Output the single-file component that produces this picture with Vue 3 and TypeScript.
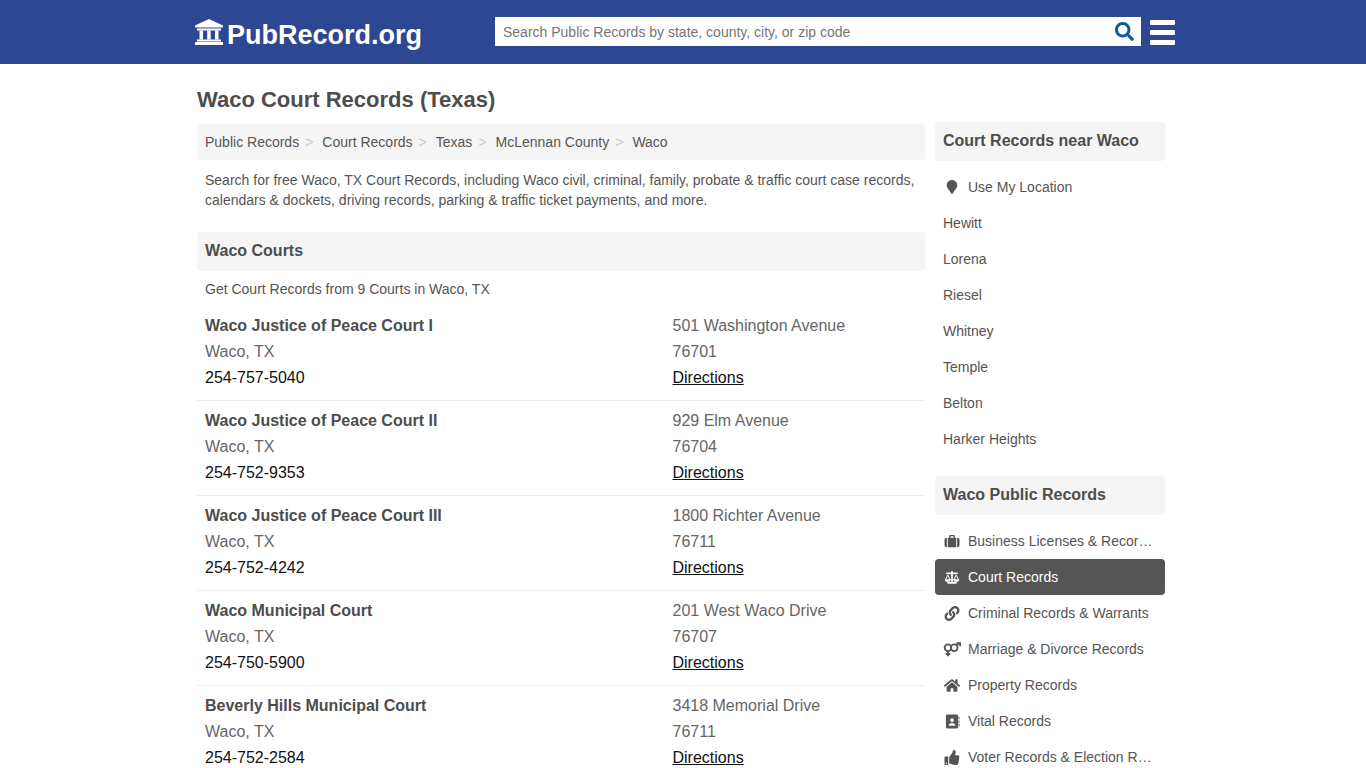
<script setup lang="ts">
const crumbs = ['Public Records', 'Court Records', 'Texas', 'McLennan County', 'Waco']

const courts = [
  { name: 'Waco Justice of Peace Court I', phone: '254-757-5040', street: '501 Washington Avenue', zip: '76701' },
  { name: 'Waco Justice of Peace Court II', phone: '254-752-9353', street: '929 Elm Avenue', zip: '76704' },
  { name: 'Waco Justice of Peace Court III', phone: '254-752-4242', street: '1800 Richter Avenue', zip: '76711' },
  { name: 'Waco Municipal Court', phone: '254-750-5900', street: '201 West Waco Drive', zip: '76707' },
  { name: 'Beverly Hills Municipal Court', phone: '254-752-2584', street: '3418 Memorial Drive', zip: '76711' },
]

const nearby = ['Hewitt', 'Lorena', 'Riesel', 'Whitney', 'Temple', 'Belton', 'Harker Heights']

const categories = [
  { label: 'Business Licenses & Records', icon: 'suitcase' },
  { label: 'Court Records', icon: 'scale', active: true },
  { label: 'Criminal Records & Warrants', icon: 'link' },
  { label: 'Marriage & Divorce Records', icon: 'venus' },
  { label: 'Property Records', icon: 'home' },
  { label: 'Vital Records', icon: 'book' },
  { label: 'Voter Records & Election Records', icon: 'thumb' },
]
</script>

<template>
  <header class="topbar">
    <div class="topbar-inner">
      <a class="logo">
        <svg class="logo-icon" viewBox="0 0 28 28" fill="#fff">
          <path d="M14 1 L28 7.5 V9.5 H0 V7.5 Z" />
          <rect x="2" y="10.5" width="24" height="2" />
          <rect x="4.5" y="12.5" width="3.5" height="9" />
          <rect x="12.2" y="12.5" width="3.5" height="9" />
          <rect x="20" y="12.5" width="3.5" height="9" />
          <rect x="2" y="21.5" width="24" height="2" />
          <rect x="0" y="24" width="28" height="3" />
        </svg>
        <span>PubRecord.org</span>
      </a>
      <div class="search">
        <span class="search-text">Search Public Records by state, county, city, or zip code</span>
        <svg class="search-icon" viewBox="0 0 512 512" fill="#0b5a9e">
          <path d="M505 442.7L405.3 343c-4.5-4.5-10.6-7-17-7H372c27.6-35.3 44-79.7 44-128C416 93.1 322.9 0 208 0S0 93.1 0 208s93.1 208 208 208c48.3 0 92.7-16.4 128-44v16.3c0 6.4 2.5 12.5 7 17l99.7 99.7c9.4 9.4 24.6 9.4 33.9 0l28.3-28.3c9.4-9.4 9.4-24.6.1-34zM208 336c-70.7 0-128-57.2-128-128 0-70.7 57.2-128 128-128 70.7 0 128 57.2 128 128 0 70.7-57.2 128-128 128z" />
        </svg>
      </div>
      <div class="burger"><i></i><i></i><i></i></div>
    </div>
  </header>

  <div class="page">
    <main class="main">
      <h1>Waco Court Records (Texas)</h1>
      <nav class="crumbs">
        <span v-for="(c, i) in crumbs" :key="c" class="crumb">
          {{ c }}<em v-if="i < crumbs.length - 1">&gt;</em>
        </span>
      </nav>
      <p class="intro">
        Search for free Waco, TX Court Records, including Waco civil, criminal, family, probate &amp; traffic court case records, calendars &amp; dockets, driving records, parking &amp; traffic ticket payments, and more.
      </p>
      <h2 class="bar">Waco Courts</h2>
      <p class="count">Get Court Records from 9 Courts in Waco, TX</p>
      <div v-for="court in courts" :key="court.name" class="court">
        <div class="court-col">
          <strong>{{ court.name }}</strong>
          <span>Waco, TX</span>
          <span class="dark">{{ court.phone }}</span>
        </div>
        <div class="court-col">
          <span>{{ court.street }}</span>
          <span>{{ court.zip }}</span>
          <a class="dark directions">Directions</a>
        </div>
      </div>
    </main>

    <aside class="side">
      <h2 class="bar">Court Records near Waco</h2>
      <ul class="links first">
        <li>
          <svg class="ic pin" viewBox="0 0 384 512" fill="#555">
            <path d="M172.268 501.67C26.97 291.031 0 269.413 0 192 0 85.961 85.961 0 192 0s192 85.961 192 192c0 77.413-26.97 99.031-172.268 309.67-9.535 13.774-29.93 13.773-39.464 0z" />
          </svg>
          <span class="label">Use My Location</span>
        </li>
        <li v-for="city in nearby" :key="city"><span class="label">{{ city }}</span></li>
      </ul>

      <h2 class="bar">Waco Public Records</h2>
      <ul class="links">
        <li v-for="cat in categories" :key="cat.label" :class="{ active: cat.active }">
          <svg v-if="cat.icon === 'suitcase'" class="ic" viewBox="0 0 16 16" fill="currentColor">
            <path d="M0 6a2 2 0 0 1 2-2h.5v10H2a2 2 0 0 1-2-2zM3.5 4H5V2.5A1.5 1.5 0 0 1 6.5 1h3A1.5 1.5 0 0 1 11 2.500V4h1.500v10h-9zM6.300 4h3.400V2.300H6.300zM13.500 4H14a2 2 0 0 1 2 2v6a2 2 0 0 1-2 2h-.5z" />
          </svg>
          <svg v-else-if="cat.icon === 'scale'" class="ic wide" viewBox="0 0 20 16" fill="currentColor">
            <path d="M9 1h2v1.500h5.500v1.300l-2 .3 3.500 6.400c0 1.600-1.600 2.500-3.300 2.500s-3.200-.9-3.200-2.500l3-6.200L11 4v9h4v2H5v-2h4V4l-3.500.3 3 6.200c0 1.600-1.500 2.500-3.200 2.500S2 12.100 2 10.500l3.500-6.400-2-.3V2.500H9zM5.300 6.300 3.600 10h3.400zM14.700 6.300 13 10h3.400z" />
          </svg>
          <svg v-else-if="cat.icon === 'link'" class="ic" viewBox="0 0 512 512" fill="currentColor">
            <path d="M326.612 185.391c59.747 59.809 58.927 155.698.36 214.59-.11.12-.24.25-.36.37l-67.2 67.2c-59.27 59.27-155.699 59.262-214.96 0-59.27-59.26-59.27-155.7 0-214.96l37.106-37.106c9.84-9.84 26.786-3.3 27.294 10.606.648 17.722 3.826 35.527 9.69 52.721 1.986 5.822.567 12.262-3.783 16.612l-13.087 13.087c-28.026 28.026-28.905 73.66-1.155 101.96 28.024 28.579 74.086 28.749 102.325.51l67.2-67.19c28.191-28.191 28.073-73.757 0-101.83-3.701-3.694-7.429-6.564-10.341-8.569a16.037 16.037 0 0 1-6.947-12.606c-.396-10.567 3.348-21.456 11.698-29.806l21.054-21.055c5.521-5.521 14.182-6.199 20.584-1.731a152.482 152.482 0 0 1 20.522 17.197zM467.547 44.449c-59.261-59.262-155.69-59.27-214.96 0l-67.2 67.2c-.12.12-.25.25-.36.37-58.566 58.892-59.387 154.781.36 214.59a152.454 152.454 0 0 0 20.521 17.196c6.402 4.468 15.064 3.789 20.584-1.731l21.054-21.055c8.35-8.35 12.094-19.239 11.698-29.806a16.037 16.037 0 0 0-6.947-12.606c-2.912-2.005-6.64-4.875-10.341-8.569-28.073-28.073-28.191-73.639 0-101.83l67.2-67.19c28.239-28.239 74.3-28.069 102.325.51 27.75 28.3 26.872 73.934-1.155 101.96l-13.087 13.087c-4.35 4.35-5.769 10.79-3.783 16.612 5.864 17.194 9.042 34.999 9.69 52.721.509 13.906 17.454 20.446 27.294 10.606l37.106-37.106c59.271-59.259 59.271-155.699.001-214.959z" />
          </svg>
          <svg v-else-if="cat.icon === 'venus'" class="ic wide" viewBox="0 0 20 16" fill="none" stroke="currentColor" stroke-width="2">
            <circle cx="5.500" cy="6" r="3.700" />
            <path d="M5.500 9.700V15.500M3 13h5" />
            <circle cx="12.500" cy="6" r="3.700" />
            <path d="M15 3.300 18.200.8M14.800.9h4.200v3.600" />
          </svg>
          <svg v-else-if="cat.icon === 'home'" class="ic" viewBox="0 0 576 512" fill="currentColor">
            <path d="M280.37 148.26L96 300.11V464a16 16 0 0 0 16 16l112.06-.29a16 16 0 0 0 15.92-16V368a16 16 0 0 1 16-16h64a16 16 0 0 1 16 16v95.64a16 16 0 0 0 16 16.05L464 480a16 16 0 0 0 16-16V300L295.67 148.26a12.19 12.19 0 0 0-15.3 0zM571.6 251.47L488 182.56V44.05a12 12 0 0 0-12-12h-56a12 12 0 0 0-12 12v72.61L318.47 43a48 48 0 0 0-61 0L4.34 251.47a12 12 0 0 0-1.6 16.9l25.5 31A12 12 0 0 0 45.15 301l235.22-193.74a12.19 12.19 0 0 1 15.3 0L530.9 301a12 12 0 0 0 16.9-1.6l25.5-31a12 12 0 0 0-1.7-16.93z" />
          </svg>
          <svg v-else-if="cat.icon === 'book'" class="ic" viewBox="0 0 16 16" fill="currentColor">
            <path d="M3 .5h10A1.500 1.500 0 0 1 14.500 2v12a1.500 1.500 0 0 1-1.500 1.500H3A1.500 1.500 0 0 1 1.500 14V2A1.500 1.500 0 0 1 3 .5zM8 4.500a2 2 0 1 0 0 4 2 2 0 0 0 0-4zM4.500 12.500h7c0-2-1.500-3-3.500-3s-3.500 1-3.500 3z" fill-rule="evenodd" />
            <path d="M15 3h1v2.500h-1zM15 6.800h1v2.500h-1zM15 10.500h1V13h-1z" />
          </svg>
          <svg v-else class="ic" viewBox="0 0 512 512" fill="currentColor">
            <path d="M104 224H24c-13.255 0-24 10.745-24 24v240c0 13.255 10.745 24 24 24h80c13.255 0 24-10.745 24-24V248c0-13.255-10.745-24-24-24zM64 472c-13.255 0-24-10.745-24-24s10.745-24 24-24 24 10.745 24 24-10.745 24-24 24zM384 81.452c0 42.416-25.97 66.208-33.277 94.548h101.723c33.397 0 59.397 27.746 59.553 58.098.084 17.938-7.546 37.249-19.439 49.197l-.11.11c9.836 23.337 8.237 56.037-9.308 79.469 8.681 25.895-.069 57.704-16.382 74.757 4.298 17.598 2.244 32.575-6.148 44.632C440.202 511.587 389.616 512 346.839 512l-2.845-.001c-48.287-.017-87.806-17.598-119.56-31.725-15.957-7.099-36.821-15.887-52.651-16.178-6.54-.12-11.783-5.457-11.783-11.998v-213.77c0-3.2 1.282-6.271 3.558-8.521 39.614-39.144 56.648-80.587 89.117-113.111 14.804-14.832 20.188-37.236 25.393-58.902C282.515 39.293 291.817 0 312 0c24 0 72 8 72 81.452z" />
          </svg>
          <span class="label">{{ cat.label }}</span>
        </li>
      </ul>
    </aside>
  </div>
</template>

<style scoped>
.topbar {
  height: 64px;
  background: #2e4792;
}

.topbar-inner {
  display: flex;
  align-items: flex-start;
  width: 980px;
  margin-left: 195px;
}

.logo {
  display: flex;
  align-items: center;
  gap: 4px;
  width: 300px;
  height: 64px;
  color: #fff;
  font-size: 27px;
  font-weight: 700;
  line-height: 64px;
  padding-top: 5px;
  box-sizing: border-box;
}

.logo-icon {
  width: 28px;
  height: 28px;
  margin-top: -6px;
}

.search {
  display: flex;
  align-items: center;
  justify-content: space-between;
  box-sizing: border-box;
  width: 646px;
  height: 29px;
  margin-top: 17px;
  padding: 0 7px 0 8px;
  background: #fff;
  color: #757575;
  font-size: 14px;
}

.search-icon {
  width: 19px;
  height: 19px;
}

.burger {
  display: flex;
  flex-direction: column;
  gap: 5px;
  width: 25px;
  margin: 20px 0 0 9px;
}

.burger i {
  display: block;
  height: 5px;
  background: #fff;
  border-radius: 1px;
}

.page {
  display: flex;
  gap: 10px;
  width: 968px;
  margin-left: 197px;
}

.main {
  width: 728px;
}

.side {
  width: 230px;
  padding-top: 58px;
}

h1 {
  margin: 0;
  padding: 22px 0 10px;
  color: #4d4d4d;
  font-size: 22px;
  font-weight: 700;
  line-height: 28px;
}

.crumbs {
  display: flex;
  align-items: center;
  height: 36px;
  padding: 0 8px;
  background: #f5f5f5;
  border-radius: 4px;
  color: #555;
  font-size: 14px;
}

.crumb em {
  margin: 0 9px 0 6px;
  color: #ccc;
  font-style: normal;
}

.intro {
  margin: 10px 0 22px;
  padding: 0 8px;
  color: #555;
  font-size: 14px;
  line-height: 20px;
}

.bar {
  margin: 0;
  padding: 0 8px;
  height: 39px;
  background: #f5f5f5;
  border-radius: 4px;
  color: #4d4d4d;
  font-size: 16px;
  font-weight: 700;
  line-height: 37px;
}

.count {
  margin: 8px 0 7px;
  padding: 0 8px;
  color: #555;
  font-size: 14px;
  line-height: 20px;
}

.court {
  display: flex;
  padding: 7px 0 9px 8px;
  border-bottom: 1px solid #eee;
  color: #666;
  font-size: 16px;
  line-height: 26px;
}

.court-col {
  display: flex;
  flex-direction: column;
  width: 467.5px;
}

.court-col:last-child {
  width: auto;
}

.court-col strong {
  color: #4d4d4d;
}

.dark {
  color: #111;
}

.directions {
  text-decoration: underline;
}

.links {
  margin: 0 0 19px;
  padding: 8px 0 0;
  list-style: none;
  color: #555;
  font-size: 14px;
}

.links:last-child {
  margin-bottom: 0;
}

.links li {
  display: flex;
  align-items: center;
  gap: 8px;
  height: 36px;
  padding: 0 12px 0 8px;
  border-radius: 4px;
}

.links li.active {
  background: #555;
  color: #fff;
}

.label {
  overflow: hidden;
  white-space: nowrap;
  text-overflow: ellipsis;
}

.ic {
  flex: none;
  width: 16px;
  height: 15px;
  margin-left: 1px;
}

.ic.wide {
  width: 18px;
  margin-left: 0;
  margin-right: -1px;
}

.ic.pin {
  height: 14px;
  margin-right: 0;
}
</style>

<style>
html,
body {
  overflow: hidden;
  background: #fff;
  font-family: "Liberation Sans", Arial, sans-serif;
}
</style>
